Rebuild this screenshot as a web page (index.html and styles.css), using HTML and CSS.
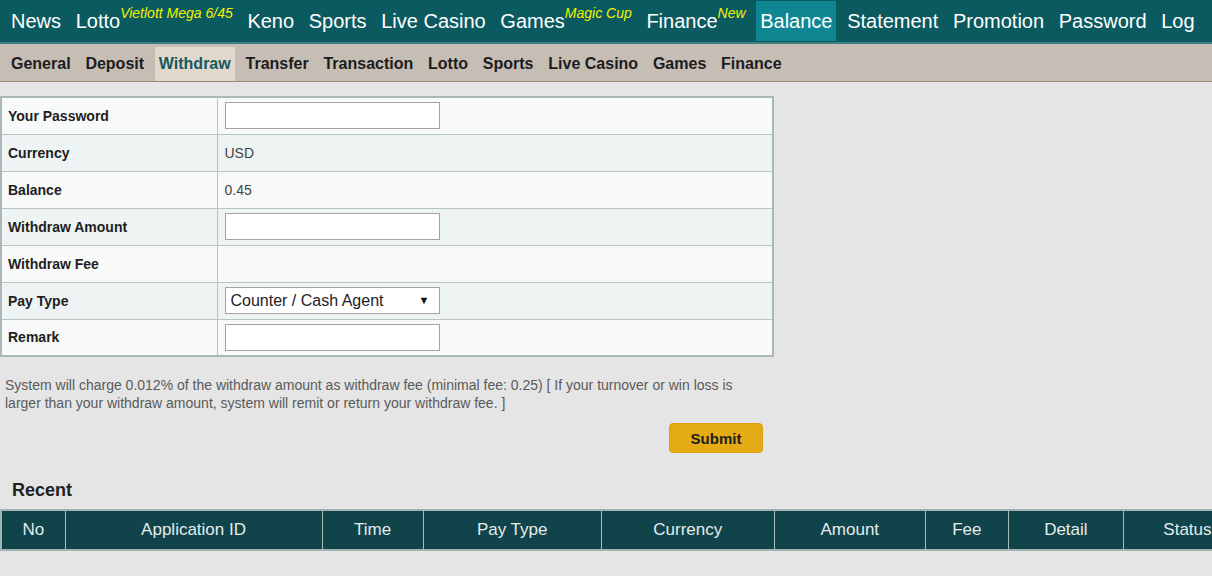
FILE: index.html
```html
<!DOCTYPE html>
<html>
<head>
<meta charset="utf-8">
<title>Withdraw</title>
<link rel="stylesheet" href="styles.css">
</head>
<body>
<div class="page">
  <nav class="topnav">
    <a class="top-item">News</a>
    <a class="top-item">Lotto<span class="tag">Vietlott Mega 6/45</span></a>
    <a class="top-item">Keno</a>
    <a class="top-item">Sports</a>
    <a class="top-item">Live Casino</a>
    <a class="top-item">Games<span class="tag">Magic Cup</span></a>
    <a class="top-item">Finance<span class="tag">New</span></a>
    <a class="top-item active">Balance</a>
    <a class="top-item">Statement</a>
    <a class="top-item">Promotion</a>
    <a class="top-item">Password</a>
    <a class="top-item">Log</a>
  </nav>
  <nav class="subnav">
    <a class="sub-item">General</a>
    <a class="sub-item">Deposit</a>
    <a class="sub-item active">Withdraw</a>
    <a class="sub-item">Transfer</a>
    <a class="sub-item">Transaction</a>
    <a class="sub-item">Lotto</a>
    <a class="sub-item">Sports</a>
    <a class="sub-item">Live Casino</a>
    <a class="sub-item">Games</a>
    <a class="sub-item">Finance</a>
  </nav>

  <main class="content">
    <table class="form-table">
      <tr><td class="label">Your Password</td><td class="value"><input class="field" type="password"></td></tr>
      <tr><td class="label">Currency</td><td class="value">USD</td></tr>
      <tr><td class="label">Balance</td><td class="value">0.45</td></tr>
      <tr><td class="label">Withdraw Amount</td><td class="value"><input class="field" type="text"></td></tr>
      <tr><td class="label">Withdraw Fee</td><td class="value"></td></tr>
      <tr><td class="label">Pay Type</td><td class="value"><span class="select-wrap"><select class="field select"><option>Counter / Cash Agent</option></select></span></td></tr>
      <tr><td class="label">Remark</td><td class="value"><input class="field" type="text"></td></tr>
    </table>

    <p class="note">System will charge 0.012% of the withdraw amount as withdraw fee (minimal fee: 0.25) [ If your turnover or win loss is larger than your withdraw amount, system will remit or return your withdraw fee. ]</p>

    <div class="actions"><button class="submit" type="button">Submit</button></div>

    <h2 class="recent">Recent</h2>

    <table class="recent-table">
      <thead>
        <tr>
          <th class="c-no">No</th>
          <th class="c-id">Application ID</th>
          <th class="c-time">Time</th>
          <th class="c-pay">Pay Type</th>
          <th class="c-cur">Currency</th>
          <th class="c-amt">Amount</th>
          <th class="c-fee">Fee</th>
          <th class="c-det">Detail</th>
          <th class="c-sta">Status</th>
        </tr>
      </thead>
    </table>
  </main>
</div>
</body>
</html>
```

FILE: styles.css
```css
* { box-sizing: border-box; }

html, body {
  margin: 0;
  padding: 0;
}

body {
  background: #e4e5e4;
  font-family: "Liberation Sans", Arial, sans-serif;
  color: #222;
}

.page {
  width: 1212px;
  overflow: hidden;
  min-height: 576px;
}

/* Top navigation */
.topnav {
  display: flex;
  gap: 6.65px;
  height: 44px;
  padding: 1px 0 1px 7px;
  background: #0a5a5f;
  border-bottom: 2px solid #3c7e81;
}

.top-item {
  display: flex;
  align-items: center;
  height: 40px;
  padding: 0 4px;
  color: #ffffff;
  font-size: 20px;
  white-space: nowrap;
}

.top-item.active {
  background: #0f8792;
}

.tag {
  align-self: flex-start;
  margin-top: 4px;
  font-size: 14px;
  line-height: 16px;
  font-style: italic;
  color: #f2f200;
}

/* Sub navigation */
.subnav {
  display: flex;
  gap: 6.8px;
  height: 38px;
  padding: 3px 0 0 7px;
  background: #c6bdb4;
  border-bottom: 1px solid #9a8a70;
}

.sub-item {
  display: flex;
  align-items: center;
  height: 34px;
  padding: 0 4px;
  font-size: 16px;
  font-weight: bold;
  color: #1c1c1c;
  white-space: nowrap;
}

.sub-item.active {
  background: #e2d7cb;
  color: #145a60;
}

/* Content */
.content {
  padding-top: 14px;
}

.form-table {
  width: 774px;
  border-collapse: collapse;
  border: 2px solid #a9b8b8;
  font-size: 14px;
}

.form-table td {
  height: 37px;
  padding: 0;
  border: 1px solid #b6c4c4;
}

.form-table tr:nth-child(odd) td { background: #f8fafa; }
.form-table tr:nth-child(even) td { background: #eef3f3; }

.label {
  width: 216px;
  padding-left: 6px !important;
  font-weight: bold;
  color: #1e1e1e;
}

.value {
  padding-left: 7px !important;
  color: #444;
}

.field {
  display: block;
  width: 215px;
  height: 27px;
  margin: 0;
  border: 1px solid #a3a3a3;
  background: #fff;
  font-family: "Liberation Sans", Arial, sans-serif;
  font-size: 16px;
  color: #222;
  outline: none;
}

.select-wrap {
  position: relative;
  display: block;
  width: 215px;
}

.select {
  -webkit-appearance: none;
  appearance: none;
  padding: 0 0 0 5px;
  border-radius: 0;
}

.select-wrap::after {
  content: "\25BC";
  position: absolute;
  right: 10px;
  top: 7px;
  font-size: 11px;
  color: #111;
  pointer-events: none;
}

.note {
  width: 774px;
  margin: 19px 0 0 0;
  padding: 0 5px;
  font-size: 14px;
  line-height: 18px;
  color: #5a5a5a;
}

.actions {
  width: 774px;
  display: flex;
  justify-content: flex-end;
  padding-right: 11px;
  margin-top: 11px;
}

.submit {
  width: 94px;
  height: 30px;
  background: #e5ab14;
  border: 1px solid #d9a110;
  border-radius: 4px;
  font-family: "Liberation Sans", Arial, sans-serif;
  font-size: 15px;
  font-weight: bold;
  color: #1e1e1e;
  padding: 0;
}

.recent {
  margin: 26px 0 0 0;
  padding-left: 12px;
  font-size: 18px;
  line-height: 22px;
  font-weight: bold;
  color: #222;
}

.recent-table {
  margin-top: 8px;
  width: 1252px;
  table-layout: fixed;
  border-collapse: collapse;
  border-top: 2px solid #a2b3b3;
  border-bottom: 2px solid #a2b3b3;
  border-left: 2px solid #a2b3b3;
}

.recent-table th {
  height: 40px;
  padding: 0;
  background: #10434a;
  color: #e4ecec;
  font-size: 17px;
  font-weight: normal;
  text-align: center;
  border-left: 1px solid #a8baba;
  border-right: 1px solid #a8baba;
}

.c-no  { width: 64px; }
.c-id  { width: 257px; }
.c-time{ width: 101px; }
.c-pay { width: 178px; }
.c-cur { width: 173px; }
.c-amt { width: 151px; }
.c-fee { width: 83px; }
.c-det { width: 115px; }
.c-sta { width: 128px; }
```
